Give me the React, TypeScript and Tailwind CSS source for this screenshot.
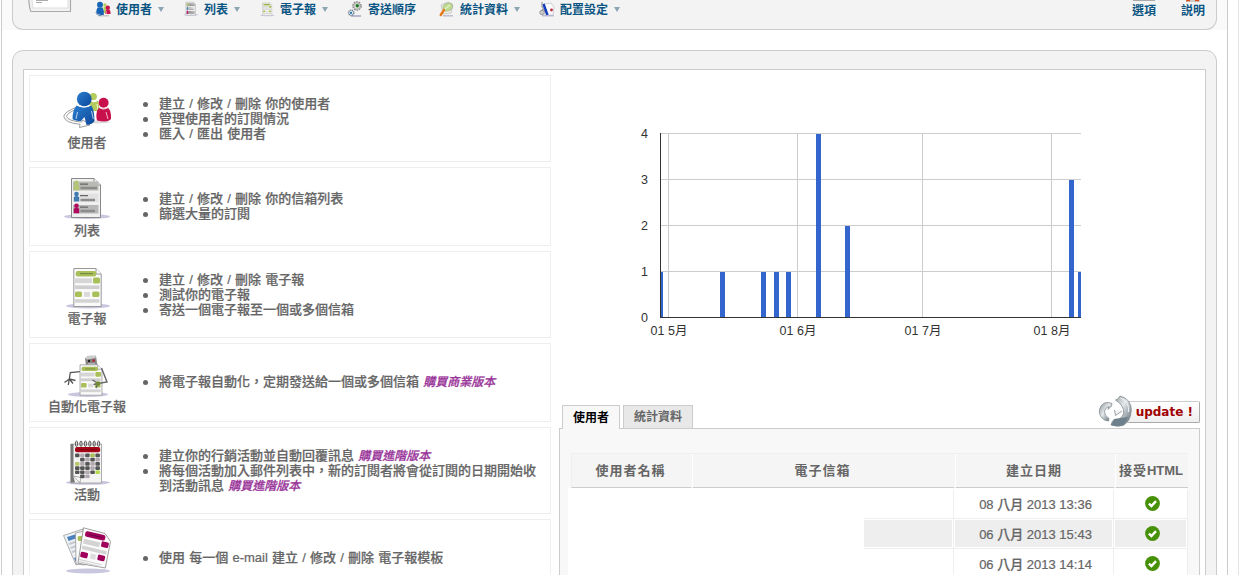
import type { ReactNode } from "react";

const cjk = "font-['Liberation_Sans','Noto_Sans_CJK_TC',sans-serif]";
const heavy = "[-webkit-text-stroke:0.22px_#666]";

function UsersIcon({ size = 48 }: { size?: number }) {
  return (
    <svg width={size} height={size} viewBox="0 0 48 48" className="block shrink-0">
      <defs>
        <linearGradient id="ub" x1="0" y1="0" x2="1" y2="1">
          <stop offset="0" stopColor="#2a7fd0" />
          <stop offset="1" stopColor="#0d4698" />
        </linearGradient>
      </defs>
      <ellipse cx="35" cy="35" rx="12" ry="1.5" fill="#ddd" />
      <circle cx="30.3" cy="9.6" r="3.6" fill="#b4cc5c" />
      <path d="M26 13.5 Q31 17 35 13.5 L37 24 H27 Z" fill="#b4cc5c" />
      <path d="M34 17 L35 23" stroke="#fff" strokeWidth=".8" />
      <circle cx="40.6" cy="15.8" r="5" fill="#c8104c" />
      <path d="M36 20.5 Q40.5 23 45 20.5 Q48.5 24 48 32 Q45 36 34 33.5 Q32 25 36 20.5Z" fill="#c8104c" />
      <path d="M36.3 20.8 Q40.5 23.6 45 20.8 M43 25 L45 32" stroke="#fff" strokeWidth=".7" fill="none" />
      <path d="M14 20 Q1 25 .8 29.5 Q2 36 17 37.3 L16.5 40.5 L27 38 L20 33 L18.5 35 Q5 34 3.5 29.5 Q4 26 14 22Z" fill="#fafafa" stroke="#777" strokeWidth=".7" />
      <path d="M13.5 18.5 Q21 22.5 28.5 18.5 Q31.5 24 31.5 34 Q29.5 37.5 23.5 38 L21.5 30 L18 34 Q12 34 9.5 32 Q9.5 23 13.5 18.5Z" fill="url(#ub)" />
      <path d="M28.5 24 L30.3 32 M14.5 25 L13 32" stroke="#fff" strokeWidth=".7" fill="none" />
      <circle cx="21.3" cy="12.1" r="7.4" fill="url(#ub)" />
      <path d="M14.5 18 Q21 22 27.5 18" stroke="#fff" strokeWidth=".8" fill="none" />
    </svg>
  );
}

function NavUsersIcon() {
  return (
    <svg width="16" height="16" viewBox="0 0 16 16" className="block shrink-0">
      <path d="M3 14.8 H14" stroke="#bbb" strokeWidth="1.2" />
      <circle cx="10" cy="4" r="1.7" fill="#b4cc5c" />
      <path d="M8.5 6 H11.5 V12 H8.5Z" fill="#b4cc5c" />
      <circle cx="5" cy="3.8" r="3" fill="#1763b5" />
      <path d="M2.5 6.5 H7.5 Q9.3 9 8.8 14 H6.5 L5 15 L1 13 Q1 9 2.5 6.5Z" fill="#1763b5" />
      <circle cx="12.8" cy="6.8" r="2.2" fill="#c8104c" />
      <path d="M11.3 8.7 H14.5 Q15.8 10 15.6 13 H10.5 Q10.3 10 11.3 8.7Z" fill="#c8104c" />
      <path d="M.5 11 Q1 13.5 5.5 14" stroke="#a9b0c4" fill="none" />
      <path d="M11.3 10 V13" stroke="#f4cfd9" strokeWidth=".6" />
    </svg>
  );
}

function Person({ y, color }: { y: number; color: string }) {
  return (
    <g fill={color}>
      <circle cx="13.5" cy={y + 2} r="2.3" />
      <path d={`M10.8 ${y + 5} Q13.5 ${y + 3} 16.2 ${y + 5} V${y + 9.6} H10.8Z`} />
    </g>
  );
}

function ListIcon({ size = 48 }: { size?: number }) {
  return (
    <svg width={size} height={size} viewBox="0 0 48 48" className="block shrink-0">
      <ellipse cx="24" cy="41.5" rx="23" ry="2.6" fill="#c9c7de" />
      <path d="M8.5 3.5 H31 L37.5 10 V42.5 H8.5Z" fill="#f0f0f0" stroke="#888" />
      <path d="M31 3.5 V10 H37.5" fill="#fff" stroke="#888" />
      <rect x="10" y="6.5" width="25.5" height="9" fill="#b9b9b3" />
      <rect x="16.5" y="18.5" width="19" height="8.5" fill="#e2e2e2" />
      <rect x="10" y="30" width="25.5" height="8.5" fill="#b8b8b8" />
      <path d="M17 9.2 H25 M17 20.7 H25 M17 32.2 H25" stroke="#666" strokeWidth="1.3" />
      <path d="M17.5 13 H34 M17.5 25 H32 M17.5 36 H32" stroke="#8c8c8c" strokeWidth="2.4" />
      <Person y={5.7} color="#b3c673" />
      <Person y={17} color="#3f79ad" />
      <Person y={28.7} color="#b00a5e" />
    </svg>
  );
}

function NewsletterSheet() {
  return (
    <>
      <path d="M10.8 5.5 H33 L38.2 11 V43.5 H10.8Z" fill="#fafafa" stroke="#999" />
      <path d="M33 5.5 V11 H38.2" fill="#fff" stroke="#999" />
      <rect x="12.7" y="8" width="20.5" height="5.4" rx="2" fill="#a9c05a" />
      <path d="M17 10.7 H30" stroke="#6f8137" strokeWidth="1" />
      <rect x="12" y="15.3" width="17" height="4.8" fill="#d6d6d6" />
      <rect x="30" y="14.5" width="7" height="6" rx="1.5" fill="#a9c05a" />
      <rect x="12" y="22.4" width="24.5" height="3.7" fill="#cfcfcf" />
      <rect x="12" y="28.4" width="7" height="5.6" rx="1.5" fill="#a9c05a" />
      <rect x="21" y="29" width="6" height="4.8" fill="#dadada" />
      <rect x="29.2" y="28.4" width="7.2" height="5.6" rx="1.5" fill="#a9c05a" />
      <rect x="12" y="36.2" width="24.5" height="3.5" fill="#d3d3d3" />
    </>
  );
}

function NewsletterIcon({ size = 48 }: { size?: number }) {
  return (
    <svg width={size} height={size} viewBox="0 0 48 48" className="block shrink-0">
      <ellipse cx="25" cy="43" rx="22" ry="2.4" fill="#c9c7de" />
      <NewsletterSheet />
    </svg>
  );
}

function RobotIcon() {
  return (
    <svg width="48" height="48" viewBox="0 0 48 48" className="block shrink-0">
      <ellipse cx="25" cy="43.5" rx="20" ry="2.4" fill="#c9c7de" />
      <path d="M22 7 L33 5 L34.5 15 L23 15Z" fill="#858585" />
      <path d="M22 7 L24.5 4.8 L33 4.2 L32.5 7 L24 8.5Z" fill="#ccc" />
      <circle cx="26" cy="10" r="1.2" fill="#222" />
      <circle cx="30.6" cy="9.6" r="1.3" fill="#b3202c" />
      <path d="M25 13 H32" stroke="#ddd" />
      <path d="M17 20.7 L7.3 21.5 L6.3 28 M6.3 28 L1.5 31.5 M6.3 28 L5.3 34 M6.3 28 L10 32.5 M6.3 28 L12.5 29.5" stroke="#555" strokeWidth="1.3" fill="none" />
      <g transform="translate(8.4 9.4) scale(.8)">
        <NewsletterSheet />
      </g>
      <path d="M38.5 17 L44 31 L35 32.5 M35 32.5 L29.5 29 M35 32.5 L30.5 33.5 M35 32.5 L33 37" stroke="#666" strokeWidth="1.4" fill="none" />
      <circle cx="35" cy="32.5" r="2.3" fill="#758a38" />
    </svg>
  );
}

const dayColors = [
  ["#555", "#b3a9b0", "#555", "#a9c05a", "#555"],
  ["", "#555", "#b3a9b0", "#555", "#b3a9b0"],
  ["#b7c96c", "#b3a9b0", "#555", "#b3a9b0", "#555"],
  ["#555", "#555", "#555", "#b3a9b0", "#555"],
  ["#555", "#555", "#b3a9b0", "#555", "#b7d94c"],
  ["", "#555", "#b3a9b0", "", ""],
];

function CalendarIcon() {
  return (
    <svg width="48" height="48" viewBox="0 0 48 48" className="block shrink-0">
      <ellipse cx="25" cy="43.6" rx="22" ry="2.2" fill="#c9c7de" />
      <path d="M8 5 H38.5 V44 H8Z" fill="#f4f4f4" stroke="#999" strokeWidth=".8" />
      <path d="M7.6 5 H10.5 V38 L12 43.5 H7.6Z" fill="#777" />
      <path d="M10.5 37 L17 44 L17.5 38.5Z" fill="#fff" stroke="#888" strokeWidth=".7" />
      <rect x="12" y="8" width="25.2" height="5.2" rx="2" fill="#a50617" />
      <path d="M15 10.6 H34" stroke="#770011" strokeWidth=".8" />
      {[13.5, 18, 22.4, 26.8, 31.2, 35.6].map((x) => (
        <ellipse key={x} cx={x} cy="4.7" rx="1.1" ry="2.7" fill="#ddd" stroke="#444" strokeWidth=".9" />
      ))}
      {dayColors.map((row, r) =>
        row.map((c, i) =>
          c ? <rect key={`${r}-${i}`} x={12 + i * 5.1} y={14.6 + r * 4.2} width="4.5" height="3.7" rx="1" fill={c} /> : null
        )
      )}
    </svg>
  );
}

function TemplatesIcon() {
  return (
    <svg width="48" height="48" viewBox="0 0 48 48" className="block shrink-0">
      <ellipse cx="25" cy="44" rx="22" ry="2.4" fill="#c9c7de" />
      <path d="M.5 8.5 L20 2 L22 34 L13 38Z" fill="#eef1f5" stroke="#999" strokeWidth=".8" />
      <path d="M4 10 L20 5 V9 L5.5 14Z" fill="#4b82bd" />
      <path d="M6 17 L15 14 M7.5 21 L15 18.5 M9 25 L15 23" stroke="#c5c9cf" strokeWidth="2" />
      <path d="M11 31 L16 29 V33 L12.4 34.5Z" fill="#4b82bd" />
      <path d="M12.5 6 L22 4 V38 L13 37Z" fill="#fafafa" stroke="#999" strokeWidth=".8" />
      <rect x="14.7" y="9" width="7" height="5" rx="1.5" fill="#a9c05a" />
      <path d="M20.5 .8 L42 6.5 L47.5 14.5 L42.3 41 L15 36.2Z" fill="#fbfbfb" stroke="#888" strokeWidth=".8" />
      <g transform="translate(20.5 .8) rotate(13)">
        <rect x="3" y="2.5" width="20.5" height="5.6" rx="2" fill="#a0005c" />
        <path d="M7 5.3 H20" stroke="#6d003e" />
        <rect x="3" y="10.5" width="16.5" height="5" fill="#d3d3d3" />
        <rect x="21" y="8.8" width="7.4" height="5.7" rx="1.5" fill="#a0005c" />
        <rect x="3" y="17.5" width="25" height="3.6" fill="#d3d3d3" />
        <rect x="3" y="23.5" width="7.4" height="5.7" rx="1.5" fill="#a0005c" />
        <rect x="13" y="23.5" width="5.5" height="5" fill="#ddd" />
        <rect x="20.4" y="22.5" width="7.4" height="5.7" rx="1.5" fill="#a0005c" />
        <path d="M3 31.8 H26 M3 34 H26" stroke="#ccc" />
      </g>
    </svg>
  );
}

function GearsIcon() {
  return (
    <svg width="16" height="16" viewBox="0 0 16 16" className="block shrink-0">
      <path d="M4 15 H14" stroke="#aaabc4" strokeWidth="1.6" />
      <circle cx="10" cy="5" r="4" fill="#eee" stroke="#8b8d8a" strokeWidth="1.6" strokeDasharray="1.7 .8" />
      <circle cx="10" cy="5" r="3.2" fill="#e3e6e1" stroke="#999" strokeWidth=".7" />
      <circle cx="10.3" cy="4.8" r="1.8" fill="#237a26" />
      <circle cx="4.2" cy="11.8" r="2.6" fill="#e6edf2" stroke="#6c8294" strokeWidth="1.4" strokeDasharray="1.2 .6" />
      <circle cx="4" cy="11.9" r="1.1" fill="#2471a8" />
    </svg>
  );
}

function StatsIcon() {
  return (
    <svg width="16" height="16" viewBox="0 0 16 16" className="block shrink-0">
      <path d="M4 14.8 H14" stroke="#b9b9cb" strokeWidth="1.4" />
      <path d="M2 4 L9 1 L14 4 L12 12 L4 13Z" fill="#eef0e5" stroke="#bbb" strokeWidth=".7" />
      <ellipse cx="8.7" cy="6" rx="5" ry="3.8" transform="rotate(-28 8.7 6)" fill="#bedb8c" stroke="#a9b99a" />
      <path d="M6 8 L11 4" stroke="#e2efc9" strokeWidth="1.5" />
      <path d="M5 9 L1.7 14" stroke="#e57a1b" strokeWidth="2.4" strokeLinecap="round" />
    </svg>
  );
}

function ConfigIcon() {
  return (
    <svg width="16" height="16" viewBox="0 0 16 16" className="block shrink-0">
      <path d="M5 3 L12 2 L15 6 L14 14 H6Z" fill="#fafafa" stroke="#c4c4cc" strokeWidth=".8" />
      <path d="M3 1 V6 L7 12 M1 11 L4 8" stroke="#888" fill="none" />
      <circle cx="3" cy="11.5" r="2.2" fill="#ccc" stroke="#888" strokeWidth=".8" />
      <path d="M4.5 3 L8.5 14" stroke="#143cc0" strokeWidth="2.4" />
      <circle cx="12.5" cy="9" r="1.4" fill="#c0283e" />
      <path d="M3 14.8 H15" stroke="#aeb0ca" strokeWidth="1.2" />
    </svg>
  );
}

function NavItem({ icon, label, width, arrow = true }: { icon: ReactNode; label: string; width: string; arrow?: boolean }) {
  return (
    <div className={`flex shrink-0 items-center ${width}`}>
      {icon}
      <span className="ml-[5px] whitespace-nowrap pt-px text-xs font-bold leading-4 text-[#0b5583]">{label}</span>
      {arrow && (
        <svg width="6" height="5" viewBox="0 0 6 5" className="ml-[6px] mt-px">
          <path d="M0 0 H6 L3 5Z" fill="#8ba5b3" />
        </svg>
      )}
    </div>
  );
}

function Card({ icon, label, tall = false, children }: { icon: ReactNode; label?: string; tall?: boolean; children: ReactNode }) {
  return (
    <div className={`flex shrink-0 items-center border border-[#eee] ${tall ? "h-[87px]" : "h-[79px]"}`}>
      <div className="flex w-[114px] shrink-0 flex-col items-center">
        {icon}
        <span className={`h-[15px] whitespace-nowrap leading-[15px] ${heavy}`}>{label}</span>
      </div>
      <ul className={`w-[394px] ${tall ? "pb-px" : "pb-[2px]"} ${heavy}`}>{children}</ul>
    </div>
  );
}

function Bullet({ children }: { children: ReactNode }) {
  return (
    <li className="flex leading-[15px] [word-spacing:0.6px]">
      <span className="-ml-px mt-[6px] mr-[11px] size-[5px] shrink-0 rounded-full bg-[#666]" />
      <span>{children}</span>
    </li>
  );
}

function Buy({ children }: { children: ReactNode }) {
  return <em className="whitespace-nowrap text-xs italic leading-none text-[#993399] [-webkit-text-stroke:0.25px_#993399]">{children}</em>;
}

const gridYs = [133.5, 179.5, 225.5, 271.5];
const months = [
  { x: 668.5, label: "01 5月" },
  { x: 797.5, label: "01 6月" },
  { x: 922.5, label: "01 7月" },
  { x: 1051.5, label: "01 8月" },
];
const bars = [
  { x: 661, w: 2, v: 1 },
  { x: 720, w: 5, v: 1 },
  { x: 761, w: 5, v: 1 },
  { x: 774, w: 5, v: 1 },
  { x: 786, w: 5, v: 1 },
  { x: 816, w: 5, v: 4 },
  { x: 845, w: 5, v: 2 },
  { x: 1069, w: 5, v: 3 },
  { x: 1078, w: 3, v: 1 },
];

function Chart() {
  return (
    <svg width="641" height="325" viewBox="559 75 641 325" className="block shrink-0 font-normal" fontSize="12.5" fill="#333">
      <g stroke="#ccc">
        {gridYs.map((y) => (
          <path key={y} d={`M661 ${y} H1081`} />
        ))}
        {months.map((m) => (
          <path key={m.x} d={`M${m.x} 133 V317`} />
        ))}
      </g>
      {bars.map((b) => (
        <rect key={b.x} x={b.x} y={318 - b.v * 46} width={b.w} height={b.v * 46 - 1} fill="#3366cc" />
      ))}
      <path d="M660.5 133 V318 M660 317.5 H1081" stroke="#333" fill="none" />
      {[4, 3, 2, 1, 0].map((n, i) => (
        <text key={n} x="648" y={138 + i * 46} textAnchor="end">
          {n}
        </text>
      ))}
      {months.map((m) => (
        <text key={m.label} x={m.x + 0.5} y="335" textAnchor="middle">
          {m.label}
        </text>
      ))}
    </svg>
  );
}

function UpdateArrows() {
  return (
    <svg width="37" height="34" viewBox="0 0 37 34" className="absolute -left-[31px] -top-[8px]">
      <defs>
        <linearGradient id="metal" x1="0" y1="0" x2="1" y2="1">
          <stop offset="0" stopColor="#8a9095" />
          <stop offset=".45" stopColor="#e4e8ea" />
          <stop offset="1" stopColor="#50626c" />
        </linearGradient>
      </defs>
      <path d="M15 9.5 Q8 6.5 4 12 Q.5 18 4.5 23.5 Q7.5 27 11.5 27 L12 24.5 Q7 21.5 7.5 17 Q8.5 13.5 12 12.5 L11 15.5 L14.5 12Z" fill="url(#metal)" stroke="#777e83" strokeWidth=".7" />
      <path d="M23 2 Q34.5 5 34.3 16.5 Q33.5 27.5 26 31.5 Q20 33 14 31 L15.5 27 Q24 26 26.5 20 Q28 12 18.5 6 L21 5Z" fill="url(#metal)" stroke="#777e83" strokeWidth=".7" />
      <path d="M14 31 L17 25 L31 23 Q28.5 31 23 32 Q18 32.5 14 31Z" fill="#6d808b" />
      <path d="M17.5 16 L18.5 21.5 L25 17" stroke="#9aa1a5" strokeWidth="1" fill="#f2f4f5" />
      <path d="M23.5 4 Q33 8 31.5 18" stroke="#f0f3f4" fill="none" />
    </svg>
  );
}

function Check() {
  return (
    <svg width="15" height="15" viewBox="0 0 15 15" className="-mt-px ml-[3px] block">
      <circle cx="7.5" cy="7.5" r="7.4" fill="#479108" />
      <path d="M3.9 7.7 L6.4 10 L11 5.1" stroke="#fff" strokeWidth="2.4" fill="none" />
    </svg>
  );
}

const columns = "grid grid-cols-[121px_263px_160px_73px]";
const headCell = "flex h-[34px] items-center justify-center border-b border-[#ccc] pr-[2px] font-bold tracking-[1px]";
const rowsData = ["08 八月 2013 13:36", "06 八月 2013 15:43", "06 八月 2013 14:14"];

function UserTable() {
  return (
    <div className="ml-[11px] mt-[24px] w-[617px]">
      <div className={`${columns} border-t border-[#efefef] bg-[#f5f5f5]`}>
        <div className={`${headCell} mr-px border-l border-l-[#eee]`}>使用者名稱</div>
        <div className={`${headCell} mr-px border-l border-l-white`}>電子信箱</div>
        <div className={`${headCell} mr-px border-l border-l-white`}>建立日期</div>
        <div className={`${headCell} whitespace-nowrap border-l border-l-white`}>
          接受<span className="tracking-normal">HTML</span>
        </div>
      </div>
      <div className="-ml-[3px] bg-white pt-px">
        {rowsData.map((date, i) => (
          <div key={date} className="grid h-[30px] grid-cols-[296px_90px_160px_74px]">
            <div />
            <div className={`border-b border-r border-[#eee] ${i % 2 ? "p-px pl-0" : ""}`}>
              <div className={`h-full ${i % 2 ? "bg-[#eee]" : ""}`} />
            </div>
            <div className={`border-b border-r border-[#eee] ${i % 2 ? "p-px" : ""}`}>
              <div className={`flex h-full items-center justify-center whitespace-pre pl-[4px] pt-[2px] ${heavy} ${i % 2 ? "bg-[#eee]" : ""}`}>{date}</div>
            </div>
            <div className={`border-b border-r border-[#eee] ${i % 2 ? "p-px" : ""}`}>
              <div className={`flex h-full items-center justify-center pt-px ${i % 2 ? "bg-[#eee]" : ""}`}>
                <Check />
              </div>
            </div>
          </div>
        ))}
      </div>
    </div>
  );
}

export default function App() {
  return (
    <div lang="zh-TW" className={`h-[575px] w-[1239px] overflow-hidden border-r border-[#e4e4e4] bg-white pl-px text-[13px] font-medium text-[#666] ${cjk}`}>
      <div className="h-[575px] w-[1227px] border-x border-[#ccc]">
        <header className="h-[30px] bg-[#fafafa] pl-[10px]">
          <div className="flex h-[30px] w-[1205px] items-start rounded-b-[11px] border border-t-0 border-[#ccc] bg-[#f3f3f3] pl-[15px]">
            <svg width="44" height="13" viewBox="0 0 44 13" className="shrink-0">
              <path d="M.8 0 Q1.5 9 3 11.5 H42.5 V0" fill="#f2f2f2" stroke="#aaa" strokeWidth="1.2" />
              <path d="M4 0 L5 8 H40 V0" fill="#fff" stroke="#ddd" />
              <path d="M8 .5 H20 M8 2.5 H14" stroke="#aaa" />
            </svg>
            <nav className="ml-[23px] mt-px flex h-4 items-center">
              <NavItem icon={<NavUsersIcon />} label="使用者" width="w-[88px]" />
              <NavItem icon={<ListIcon size={16} />} label="列表" width="w-[76px]" />
              <NavItem icon={<NewsletterIcon size={16} />} label="電子報" width="w-[88px]" />
              <NavItem icon={<GearsIcon />} label="寄送順序" width="w-[92px]" arrow={false} />
              <NavItem icon={<StatsIcon />} label="統計資料" width="w-[100px]" />
              <NavItem icon={<ConfigIcon />} label="配置設定" width="w-[100px]" />
            </nav>
            <div className="ml-auto mr-[11px] flex gap-[25px] text-xs font-bold leading-4 text-[#0b5583]">
              <div className="flex flex-col items-center">
                <svg width="24" height="3">
                  <path d="M1 .5 H23" stroke="#aaa" />
                </svg>
                選項
              </div>
              <div className="flex flex-col items-center">
                <svg width="24" height="3">
                  <path d="M5 1 H19" stroke="#ccc" strokeWidth="2" />
                  <path d="M5 .5 H9 M14 .5 H18" stroke="#d9501c" strokeWidth="1.4" />
                </svg>
                説明
              </div>
            </div>
          </div>
        </header>

        <main className="ml-[10px] mt-5 h-[560px] w-[1205px] rounded-t-[11px] border border-[#ccc] bg-[#f3f3f3] px-[10px] pt-[18px]">
          <div className="flex h-[560px] border border-[#ccc] bg-white pl-[5px] pt-[5px]">
            <section className="flex w-[522px] shrink-0 flex-col gap-[5px]">
              <Card icon={<UsersIcon />} label="使用者" tall>
                <Bullet>建立 / 修改 / 刪除 你的使用者</Bullet>
                <Bullet>管理使用者的訂閱情況</Bullet>
                <Bullet>匯入 / 匯出 使用者</Bullet>
              </Card>
              <Card icon={<ListIcon />} label="列表">
                <Bullet>建立 / 修改 / 刪除 你的信箱列表</Bullet>
                <Bullet>篩選大量的訂閱</Bullet>
              </Card>
              <Card icon={<NewsletterIcon />} label="電子報" tall>
                <Bullet>建立 / 修改 / 刪除 電子報</Bullet>
                <Bullet>測試你的電子報</Bullet>
                <Bullet>寄送一個電子報至一個或多個信箱</Bullet>
              </Card>
              <Card icon={<RobotIcon />} label="自動化電子報">
                <Bullet>
                  將電子報自動化，定期發送給一個或多個信箱 <Buy>購買商業版本</Buy>
                </Bullet>
              </Card>
              <Card icon={<CalendarIcon />} label="活動" tall>
                <Bullet>
                  建立你的行銷活動並自動回覆訊息 <Buy>購買進階版本</Buy>
                </Bullet>
                <Bullet>
                  將每個活動加入郵件列表中，新的訂閱者將會從訂閱的日期開始收到活動訊息 <Buy>購買進階版本</Buy>
                </Bullet>
              </Card>
              <Card icon={<TemplatesIcon />}>
                <Bullet>使用 每一個 e-mail 建立 / 修改 / 刪除 電子報模板</Bullet>
              </Card>
            </section>

            <section className="ml-[8px] flex w-[641px] shrink-0 flex-col">
              <Chart />
              <div className="flex h-[28px] shrink-0 items-end pl-[3px] text-xs font-bold">
                <div className="relative z-10 -mb-px flex h-[24px] w-[58px] items-center justify-center border border-b-0 border-[#ccc] bg-[#f8f8f8] text-black">使用者</div>
                <div className="ml-[3px] flex h-[23px] w-[70px] items-center justify-center border border-b-0 border-[#ccc] bg-[#e8e8e8]">統計資料</div>
                <div className="relative mb-[5px] ml-auto h-[22px] w-[73px] rounded-[2px] border border-[#ccc] border-b-[#aaa] border-r-[#aaa] bg-linear-to-b from-white to-[#eee]">
                  <UpdateArrows />
                  <span className="absolute right-[6px] top-0 whitespace-nowrap font-['DejaVu_Sans'] text-[12px] font-bold leading-5 text-[#a00000]">update !</span>
                </div>
              </div>
              <div className="h-[200px] shrink-0 border border-[#ccc] bg-[#f8f8f8]">
                <UserTable />
              </div>
            </section>
          </div>
        </main>
      </div>
    </div>
  );
}
